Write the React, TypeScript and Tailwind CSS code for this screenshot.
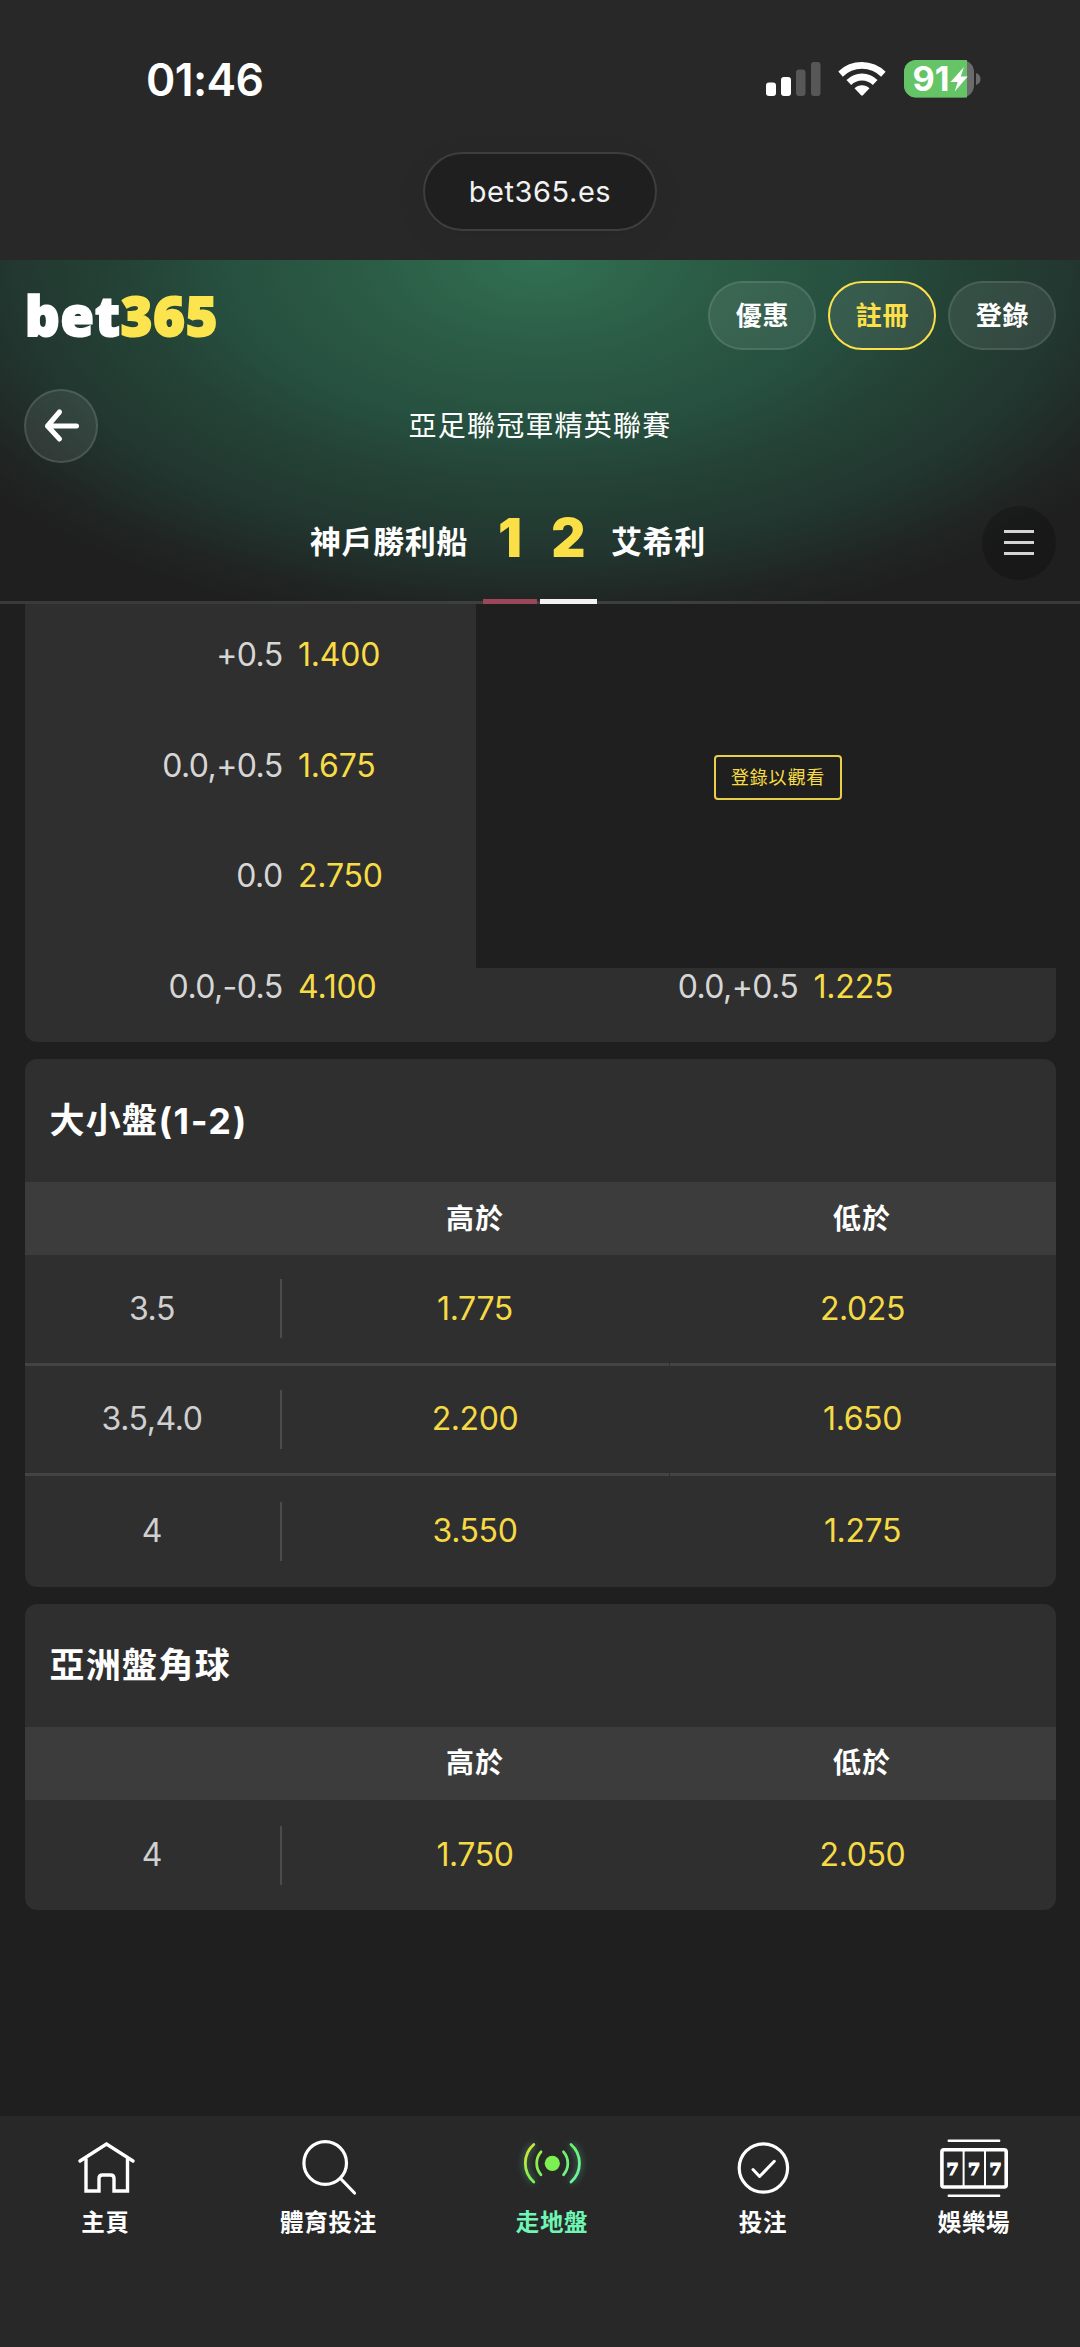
import React from "react";

const FONT = "font-['Inter','Noto_Sans_CJK_TC',sans-serif]";

type Row = { line: string; over: string; under: string };

function StatusBar() {
  return (
    <div className="flex h-[152px] items-start justify-between pr-[99px] pl-[146px]">
      <div className="mt-[58px] text-[44.5px] leading-[44px] font-semibold tracking-[-0.6px] text-white">01:46</div>
      <svg className="mt-[56px]" width="216" height="46" viewBox="765 56 216 46">
        <g fill="#fff">
          <rect x="766" y="82.500" width="10" height="13.500" rx="3" />
          <rect x="781" y="77" width="10" height="19" rx="3" />
          <rect x="796" y="69.500" width="9.500" height="26.500" rx="3" opacity="0.22" />
          <rect x="811" y="62" width="9.500" height="34" rx="3" opacity="0.22" />
          <path d="M838.300 71.500a33.500 33.500 0 0 1 47.300 0.300l-4.500 4.900a27 27 0 0 0-38.300 0z" />
          <path d="M846.500 80a21.800 21.800 0 0 1 31 0l-4.700 5a15.200 15.200 0 0 0-21.600 0z" />
          <path d="M854.500 88.300a10.500 10.500 0 0 1 15 0l-6.600 7q-0.900 0.900-1.800 0z" />
        </g>
        <rect x="904" y="60" width="70" height="37.500" rx="12" fill="#6b6b6b" />
        <path d="M916 60h51v37.500h-51a12 12 0 0 1-12-12v-13.500a12 12 0 0 1 12-12z" fill="#65c466" />
        <path d="M976 73q4.500 1.500 4.500 6t-4.500 6z" fill="#6b6b6b" />
        <text x="912.500" y="91" fontSize="33.500" fontWeight="700" fill="#fff" fontFamily="Inter, sans-serif" textLength="37" lengthAdjust="spacingAndGlyphs">91</text>
        <path d="M964 67l-13.500 15h7.200l-3 9.500 13-15h-7z" fill="#fff" />
      </svg>
    </div>
  );
}

function PillButton({ label, active }: { label: string; active?: boolean }) {
  return (
    <button
      className={
        "flex h-[69px] w-[108px] items-center justify-center rounded-full border-2 bg-white/8 pl-px text-[26px] font-bold tracking-[0.8px] " +
        (active ? "border-[#fbe04a] text-[#fbe04a]" : "border-white/10 text-white")
      }
    >
      {label}
    </button>
  );
}

function Header() {
  return (
    <header className="relative h-[344px] border-b-[3px] border-white/12 bg-[radial-gradient(700px_377px_at_50%_0,#317052_0%,#2b5b45_26%,#264f3f_46%,#244235_60%,#223730_76%,#202624_91%,#1f1f1f_100%)] bg-origin-border">
      <div className="flex h-[111px] items-center justify-between pr-[24px] pl-[25px]">
        <div className="flex pb-[2px] text-[54px] leading-none font-black font-['Noto_Sans',sans-serif] tracking-[0.900px]">
          <span className="text-white [-webkit-text-stroke:2px_#fff]">bet</span>
          <span className="text-[#fbe44e] [-webkit-text-stroke:2px_#fbe44e]">365</span>
        </div>
        <div className="flex gap-[12px]">
          <PillButton label="優惠" />
          <PillButton label="註冊" active />
          <PillButton label="登錄" />
        </div>
      </div>

      <div className="flex h-[110px] items-center">
        <button className="ml-[24px] flex size-[74px] items-center justify-center rounded-full border-2 border-white/12 bg-white/8">
          <svg width="40" height="40" viewBox="0 0 40 40" fill="none" stroke="#fff" strokeWidth="5" strokeLinecap="round" strokeLinejoin="round">
            <path d="M35.500 20H6.500M18.500 6L6.500 20L18.500 33" />
          </svg>
        </button>
        <div className="mr-[98px] grow text-center text-[28px] tracking-[1.200px] text-white">亞足聯冠軍精英聯賽</div>
      </div>

      <div className="flex h-[123px] items-center text-white">
        <div className="w-[468px] text-right text-[31px] font-bold tracking-[0.600px]">神戶勝利船</div>
        <div className="ml-[15px] w-[54px] pb-[9px] text-center text-[53px] leading-none font-black text-[#fadf47]">1</div>
        <div className="ml-[3px] w-[57px] pb-[9px] text-center text-[53px] leading-none font-black text-[#fadf47]">2</div>
        <div className="ml-[14px] grow text-[31px] font-bold tracking-[0.600px]">艾希利</div>
        <button className="mr-[24px] flex size-[74px] flex-col items-center justify-center gap-[8px] rounded-full bg-black/20">
          <span className="h-[3px] w-[30px] bg-[#d4d4d4]" />
          <span className="h-[3px] w-[30px] bg-[#d4d4d4]" />
          <span className="h-[3px] w-[30px] bg-[#d4d4d4]" />
        </button>
      </div>
      <div className="absolute -bottom-[3px] left-[483px] flex gap-[3px]">
        <div className="h-[5px] w-[54px] bg-[#9b4659]" />
        <div className="h-[5px] w-[57px] bg-[#f4f1f2]" />
      </div>
    </header>
  );
}

function Handicap({ line, odds }: { line: string; odds: string }) {
  return (
    <div className="flex w-1/2 gap-[15.500px] text-[32px]">
      <span className="w-[258px] text-right tracking-[-0.600px] text-[#d6d6d6]">{line}</span>
      <span className="tracking-[-0.200px] text-[#f8dc45]">{odds}</span>
    </div>
  );
}

function HandicapCard() {
  const rows = [
    ["+0.5", "1.400"],
    ["0.0,+0.5", "1.675"],
    ["0.0", "2.750"],
    ["0.0,-0.5", "4.100", "0.0,+0.5", "1.225"],
  ];
  return (
    <section className="relative">
      <div className="mx-[24.500px] flex h-[438px] flex-col justify-end overflow-hidden rounded-b-[12px] bg-[#2f2f2f]">
        {rows.map((r) => (
          <div key={r[0]} className="flex h-[110.600px] shrink-0 items-center">
            <Handicap line={r[0]} odds={r[1]} />
            {r.length > 2 && <Handicap line={r[2]} odds={r[3]} />}
          </div>
        ))}
      </div>
      <div className="absolute top-0 right-0 flex h-[364px] w-[604px] items-start justify-center bg-[#1f1f1f]">
        <button className="mt-[151px] flex h-[45px] w-[128px] items-center justify-center rounded-[4px] border-2 border-[#e8cf49] text-[18px] tracking-[0.800px] text-[#f8dc45]">
          登錄以觀看
        </button>
      </div>
    </section>
  );
}

function TotalsCard({ title, suffix, rows }: { title: string; suffix?: string; rows: Row[] }) {
  return (
    <section className="mx-[24.500px] mt-[17px] overflow-hidden rounded-[12px] bg-[#2f2f2f]">
      <h2 className="flex h-[123px] items-center pl-[25px] text-[35px] font-bold tracking-[1.300px] text-white">
        {title}
        {suffix && <span className="text-[36px] tracking-[1.600px]">{suffix}</span>}
      </h2>
      <div className="grid h-[73px] grid-cols-[257px_387px_387px] items-center bg-[#3c3c3c] text-center text-[28px] font-bold tracking-[1px] text-white">
        <span />
        <span>高於</span>
        <span>低於</span>
      </div>
      {rows.map((r, i) => {
        const border = i < rows.length - 1 ? "border-b-[3px] " : "";
        return (
          <div
            key={r.line}
            className="grid h-[110.600px] grid-cols-[257px_387px_387px] text-center text-[32px] tracking-[-0.400px]"
          >
            <div className={border + "flex items-center justify-between border-[#434343]"}>
              <span className="grow text-[#d0d0d0]">{r.line}</span>
              <span className="h-[59px] w-[2px] bg-[#4c4c4c]" />
            </div>
            <div className={border + "flex items-center justify-center border-[#434343] text-[#f5da45]"}>{r.over}</div>
            <div className={border + "ml-px flex items-center justify-center border-[#434343] text-[#f5da45]"}>{r.under}</div>
          </div>
        );
      })}
    </section>
  );
}

function HomeIcon() {
  return (
    <svg width="60" height="60" viewBox="75 2138 60 60" fill="none" stroke="#fff" strokeWidth="3.400" strokeLinecap="round">
      <path d="M79 2161L105.500 2144L132 2161" />
      <path d="M85 2158.500V2191H98V2178.500Q98 2175 101.500 2175H109.500Q113 2175 113 2178.500V2191H126.500V2158.500" strokeLinecap="butt" />
    </svg>
  );
}

function SearchIcon() {
  return (
    <svg width="60" height="60" viewBox="298 2138 60 60" fill="none" stroke="#fff" strokeWidth="3.200" strokeLinecap="round">
      <circle cx="324.200" cy="2163" r="21.300" />
      <path d="M340 2179L353.500 2193" />
    </svg>
  );
}

function LiveIcon() {
  return (
    <svg className="overflow-visible" width="60" height="60" viewBox="522 2138 60 60" fill="none">
      <defs>
        <linearGradient id="live" gradientUnits="userSpaceOnUse" x1="526" y1="2146" x2="578" y2="2180">
          <stop offset="0" stopColor="#dfe23a" />
          <stop offset="0.300" stopColor="#86f04c" />
          <stop offset="0.600" stopColor="#6cf26a" />
          <stop offset="1" stopColor="#6cf5a4" />
        </linearGradient>
        <filter id="glow" x="-40%" y="-40%" width="180%" height="180%">
          <feGaussianBlur stdDeviation="3.500" />
        </filter>
      </defs>
      <g opacity="0.450" filter="url(#glow)" stroke="#5fd0a0" strokeWidth="4">
        <path d="M533.800 2144.500a25 25 0 0 0 0 37.500M571 2144.500a25 25 0 0 1 0 37.500" />
      </g>
      <g stroke="url(#live)" strokeWidth="2.800" strokeLinecap="round">
        <path d="M533.800 2144.500a25 25 0 0 0 0 37.500M571 2144.500a25 25 0 0 1 0 37.500" />
        <path d="M541 2151.800a17.500 17.500 0 0 0 0 23M563.500 2151.800a17.500 17.500 0 0 1 0 23" />
      </g>
      <circle cx="552.300" cy="2163.300" r="7.600" fill="#7cf050" />
    </svg>
  );
}

function BetsIcon() {
  return (
    <svg width="60" height="60" viewBox="733 2138 60 60" fill="none" stroke="#fff" strokeLinecap="round" strokeLinejoin="round">
      <circle cx="763.400" cy="2168" r="24.200" strokeWidth="3.200" />
      <path d="M753 2169.500L759.600 2176.500L774.300 2161.300" strokeWidth="3" />
    </svg>
  );
}

function CasinoIcon() {
  return (
    <svg width="72" height="60" viewBox="938.300 2138 72 60" fill="none" stroke="#fff" strokeLinecap="round">
      <path d="M949 2140.800H999.500M949 2195.800H999.500" strokeWidth="2.400" />
      <rect x="942.200" y="2149.700" width="64.300" height="37.300" rx="2" strokeWidth="3.600" />
      <path d="M963.900 2150V2187M985.300 2150V2187" strokeWidth="2" />
      <g fill="#fff" strokeWidth="1.200" fontFamily="'DejaVu Serif', serif" fontWeight="700" fontSize="17.500" textAnchor="middle">
        <text x="953" y="2174.500">7</text>
        <text x="974.500" y="2174.500">7</text>
        <text x="995.800" y="2174.500">7</text>
      </g>
    </svg>
  );
}

function NavItem({ icon, label, className }: { icon: React.ReactNode; label: string; className: string }) {
  return (
    <a className={"flex flex-col items-center pt-[22px] text-[23.500px] font-bold " + className}>
      {icon}
      <span className="mt-[9px] leading-[32px] tracking-[0.700px] whitespace-nowrap">{label}</span>
    </a>
  );
}

export default function App() {
  return (
    <div className={"flex h-[2347px] w-[1080px] flex-col overflow-hidden bg-[#1f1f1f] " + FONT}>
      <div className="h-[260px] bg-[#282828]">
        <StatusBar />
        <div className="mx-auto flex h-[79px] w-[234px] items-center justify-center rounded-full border-2 border-[#3e3e3e] bg-[#1f1f1f] text-[29px] tracking-[0.550px] text-[#f2f2f2] shadow-[0_8px_30px_6px_rgba(0,0,0,0.04)]">
          bet365.es
        </div>
      </div>
      <Header />
      <main className="grow">
        <HandicapCard />
        <TotalsCard
          title="大小盤"
          suffix="(1-2)"
          rows={[
            { line: "3.5", over: "1.775", under: "2.025" },
            { line: "3.5,4.0", over: "2.200", under: "1.650" },
            { line: "4", over: "3.550", under: "1.275" },
          ]}
        />
        <TotalsCard title="亞洲盤角球" rows={[{ line: "4", over: "1.750", under: "2.050" }]} />
      </main>
      <nav className="grid h-[231px] shrink-0 grid-cols-[211px_235px_212px_210px_212px] bg-[#282828] text-white">
        <NavItem icon={<HomeIcon />} label="主頁" className="" />
        <NavItem icon={<SearchIcon />} label="體育投注" className="" />
        <NavItem icon={<LiveIcon />} label="走地盤" className="text-[#6ff5b4]" />
        <NavItem icon={<BetsIcon />} label="投注" className="" />
        <NavItem icon={<CasinoIcon />} label="娛樂場" className="" />
      </nav>
    </div>
  );
}
